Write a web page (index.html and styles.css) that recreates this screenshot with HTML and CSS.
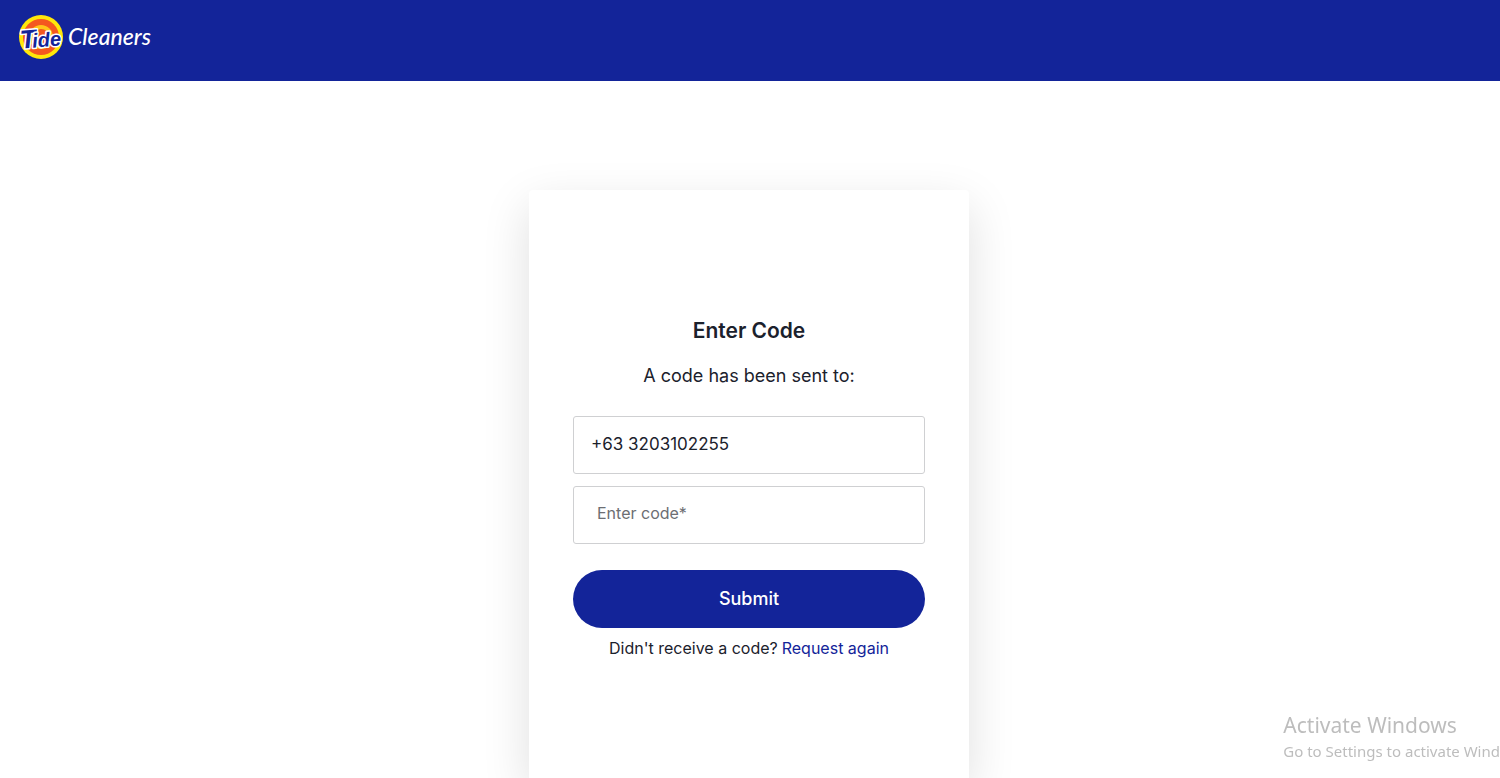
FILE: index.html
```html
<!DOCTYPE html>
<html lang="en">
<head>
<meta charset="utf-8">
<meta name="viewport" content="width=device-width, initial-scale=1">
<title>Tide Cleaners</title>
<link rel="stylesheet" href="styles.css">
</head>
<body>
<header class="topbar">
  <a class="brand" href="#" aria-label="Tide Cleaners">
    <svg class="logo" width="134" height="46" viewBox="0 0 134 46">
      <circle cx="23" cy="23" r="22" fill="#ffe70a"/>
      <circle cx="23" cy="23" r="18" fill="#f4581f"/>
      <circle cx="23" cy="23" r="12" fill="#ffc61a"/>
      <circle cx="23" cy="23" r="8" fill="#f4581f"/>
      <text class="logo-tide" x="2" y="33" transform="rotate(-5 23 24)"><tspan class="logo-initial">T</tspan><tspan x="14">ide</tspan></text>
      <text class="logo-cleaners" x="50" y="31">Cleaners</text>
    </svg>
  </a>
</header>
<main class="page">
  <form class="card">
    <h1 class="title">Enter Code</h1>
    <p class="lead">A code has been sent to:</p>
    <input class="field" type="tel" value="+63 3203102255" aria-label="Phone number" readonly>
    <input class="field field-code" type="text" placeholder="Enter code*" aria-label="Enter code">
    <button class="submit" type="button">Submit</button>
    <p class="resend"><span>Didn't receive a code?</span><a class="link" href="#">Request again</a></p>
  </form>
</main>
<aside class="watermark">
  <p class="watermark-title">Activate Windows</p>
  <p class="watermark-text">Go to Settings to activate Wind</p>
</aside>
</body>
</html>
```

FILE: styles.css
```css
* { box-sizing: border-box; }

body {
  margin: 0;
  min-height: 100vh;
  display: flex;
  flex-direction: column;
  background: #fff;
  color: #1b212c;
  font-family: Inter, "Liberation Sans", sans-serif;
}

h1, p { margin: 0; }

.topbar {
  padding: 14px 18px 21px;
  background: #132499;
}

.brand { display: block; width: fit-content; }
.logo { display: block; overflow: visible; }

.logo-tide {
  font: italic 700 20px "Liberation Sans", sans-serif;
  fill: #132499;
  stroke: #fff;
  stroke-width: 3px;
  stroke-linejoin: round;
  paint-order: stroke;
}
.logo-initial { font-size: 26px; }

.logo-cleaners {
  font: italic 500 23px Lato, sans-serif;
  fill: #fff;
}

.page {
  flex: 1;
  display: flex;
  justify-content: center;
  padding: 109px 2px 0 0;
  overflow: hidden;
}

.card {
  width: 100%;
  max-width: 440px;
  display: flex;
  flex-direction: column;
  padding: 127px 44px 0;
  background: #fff;
  border-radius: 4px 4px 0 0;
  box-shadow: 0 16px 48px rgba(0, 0, 0, 0.13);
}

.title {
  font-size: 21px;
  font-weight: 600;
  line-height: 28px;
  text-align: center;
}

.lead {
  margin-top: 17px;
  font-size: 18px;
  line-height: 28px;
  text-align: center;
}

.field {
  width: 100%;
  height: 58px;
  margin-top: 26px;
  padding: 0 17px 2px;
  border: 1px solid #cfd0d2;
  border-radius: 3px;
  background: #fff;
  color: #1b212c;
  font: 400 17px Inter, "Liberation Sans", sans-serif;
}
.field-code {
  margin-top: 12px;
  padding: 0 23px 4px;
  font-size: 16px;
}
.field-code::placeholder { color: #6c6e73; opacity: 1; }

.submit {
  height: 58px;
  margin-top: 26px;
  padding: 0 0 2px;
  border: 0;
  border-radius: 29px;
  background: #132499;
  color: #fff;
  font: 500 18px Inter, "Liberation Sans", sans-serif;
}

.resend {
  display: flex;
  justify-content: center;
  gap: 4px;
  margin-top: 8px;
  font-size: 16px;
  line-height: 24px;
  white-space: nowrap;
}
.link { color: #132499; text-decoration: none; }

.watermark {
  position: fixed;
  right: 0;
  bottom: 15px;
  color: #bdbdbd;
  font-family: "Noto Sans", "Open Sans", sans-serif;
  white-space: nowrap;
}
.watermark-title { font-size: 21px; line-height: 28px; }
.watermark-text { font-size: 15px; line-height: 24px; }
```
